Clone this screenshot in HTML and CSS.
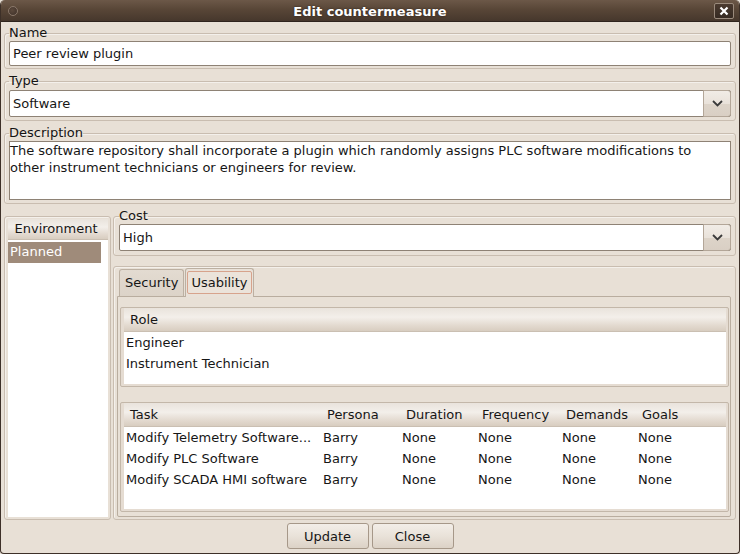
FILE: index.html
```html
<!DOCTYPE html>
<html>
<head>
<meta charset="utf-8">
<link rel="stylesheet" href="styles.css">
</head>
<body>
<div class="window">
  <div class="titlebar">
    <div class="tb-left"><span class="tb-circle"></span></div>
    <div class="tb-title">Edit countermeasure</div>
    <div class="tb-right">
      <span class="tb-close"><svg width="10" height="10" viewBox="0 0 10 10"><path d="M1.5 1.5 L8.5 8.5 M8.5 1.5 L1.5 8.5" stroke="#ffffff" stroke-width="2.2" fill="none"/></svg></span>
    </div>
  </div>
  <div class="content">
    <fieldset class="group g-name">
      <legend>Name</legend>
      <div class="field">Peer review plugin</div>
    </fieldset>
    <fieldset class="group g-type">
      <legend>Type</legend>
      <div class="combo">
        <span class="combo-text">Software</span>
        <span class="combo-btn"><svg width="11" height="7" viewBox="0 0 11 7"><path d="M1 1 L5.5 5.5 L10 1" stroke="#3a3a3a" stroke-width="1.8" fill="none"/></svg></span>
      </div>
    </fieldset>
    <fieldset class="group g-desc">
      <legend>Description</legend>
      <div class="textarea">The software repository shall incorporate a plugin which randomly assigns PLC software modifications to<br>other instrument technicians or engineers for review.</div>
    </fieldset>
    <div class="lower">
      <div class="env-panel">
        <div class="env-inner">
          <div class="list-header env-header">Environment</div>
          <div class="env-list">
            <div class="env-item selected">Planned</div>
          </div>
        </div>
      </div>
      <div class="right-col">
        <fieldset class="group g-cost">
          <legend>Cost</legend>
          <div class="combo">
            <span class="combo-text">High</span>
            <span class="combo-btn"><svg width="11" height="7" viewBox="0 0 11 7"><path d="M1 1 L5.5 5.5 L10 1" stroke="#3a3a3a" stroke-width="1.8" fill="none"/></svg></span>
          </div>
        </fieldset>
        <div class="tab-frame">
          <div class="tabbar">
            <div class="tab">Security</div>
            <div class="tab active"><span class="tab-focus">Usability</span></div>
          </div>
          <div class="tab-panel">
            <div class="table role-table">
              <div class="table-inner">
                <div class="list-header thead role-cols"><span>Role</span></div>
                <div class="trow role-cols"><span>Engineer</span></div>
                <div class="trow role-cols"><span>Instrument Technician</span></div>
              </div>
            </div>
            <div class="table task-table">
              <div class="table-inner">
                <div class="list-header thead task-cols">
                  <span>Task</span><span>Persona</span><span>Duration</span><span>Frequency</span><span>Demands</span><span>Goals</span>
                </div>
                <div class="trow task-cols">
                  <span>Modify Telemetry Software...</span><span>Barry</span><span>None</span><span>None</span><span>None</span><span>None</span>
                </div>
                <div class="trow task-cols">
                  <span>Modify PLC Software</span><span>Barry</span><span>None</span><span>None</span><span>None</span><span>None</span>
                </div>
                <div class="trow task-cols">
                  <span>Modify SCADA HMI software</span><span>Barry</span><span>None</span><span>None</span><span>None</span><span>None</span>
                </div>
              </div>
            </div>
          </div>
        </div>
      </div>
    </div>
    <div class="buttons">
      <button class="btn btn-update">Update</button>
      <button class="btn btn-close">Close</button>
    </div>
  </div>
</div>
</body>
</html>
```

FILE: styles.css
```css
* { box-sizing: border-box; }

html, body {
  margin: 0;
  padding: 0;
  background: #e8e0d6;
}

body {
  font-family: "DejaVu Sans", "Liberation Sans", sans-serif;
  font-size: 13px;
  color: #161616;
}

.window {
  width: 740px;
  height: 554px;
  border: 1px solid #3d3028;
  border-top: 0;
  border-radius: 5px 5px 4px 4px;
  background: #e8e0d6;
  overflow: hidden;
  display: flex;
  flex-direction: column;
}

.titlebar {
  height: 22px;
  flex: none;
  display: grid;
  grid-template-columns: 1fr auto 1fr;
  align-items: center;
  background: linear-gradient(to bottom, #6c5848 0%, #584637 45%, #46372c 100%);
  border-bottom: 1px solid #2f241d;
  color: #ffffff;
}

.tb-left { display: flex; align-items: center; padding-left: 7px; }

.tb-circle {
  width: 10px;
  height: 10px;
  border-radius: 50%;
  background: radial-gradient(circle at 40% 40%, #5c4a3d, #3e3028);
  border: 1px solid #8a786a;
}

.tb-title {
  font-weight: bold;
  font-size: 13px;
  text-shadow: 0 0 2px #2a1f18;
  padding-top: 1px;
}

.tb-right { display: flex; justify-content: flex-end; padding-right: 5px; }

.tb-close {
  width: 20px;
  height: 16px;
  display: flex;
  align-items: center;
  justify-content: center;
  background: linear-gradient(to bottom, #4a3a2f, #362a22);
  border: 1px solid #9a8a7c;
  border-radius: 2px;
}

.content {
  flex: 1;
  display: flex;
  flex-direction: column;
  padding: 0 3px;
}

.group {
  margin: 4px 0 0 0;
  min-width: 0;
  border: 1px solid #c9bdb0;
  border-radius: 3px;
  box-shadow: inset 1px 1px 0 #f4f0eb;
  padding: 0 4px 3px 4px;
}

.group legend {
  padding: 0;
  line-height: 16px;
  color: #141414;
}

.g-name { margin-top: 3px; padding-bottom: 2px; }

.field {
  height: 25px;
  background: #ffffff;
  border: 1px solid #8e8275;
  border-radius: 2px;
  padding: 0 3px;
  line-height: 23px;
}

.combo {
  margin-top: 1px;
  height: 27px;
  display: flex;
  background: #ffffff;
  border: 1px solid #8e8275;
  border-radius: 2px;
}

.combo-text {
  flex: 1;
  padding-left: 3px;
  line-height: 25px;
}

.combo-btn {
  width: 28px;
  margin: -1px -1px -1px 0;
  border: 1px solid #b3a698;
  border-radius: 0 3px 3px 0;
  background: linear-gradient(to bottom, #f1ece6 0%, #e9e2da 50%, #ddd4c9 51%, #d9cfc4 100%);
  display: flex;
  align-items: center;
  justify-content: center;
}

.textarea {
  height: 59px;
  background: #ffffff;
  border: 1px solid #8e8275;
  padding: 0;
  line-height: 17px;
}

.lower {
  margin-top: 4px;
  height: 312px;
  flex: none;
  display: flex;
  gap: 2px;
}

.env-panel {
  margin-top: 8px;
  width: 107px;
  flex: none;
  border: 1px solid #c9bdb0;
  border-radius: 3px;
  box-shadow: inset 1px 1px 0 #f4f0eb;
  padding: 2px 2px 2px 3px;
  display: flex;
}

.env-inner {
  flex: 1;
  display: flex;
  flex-direction: column;
}

.list-header {
  background: linear-gradient(to bottom, #e9e3dc 0%, #f3efea 40%, #e3dad0 75%, #d8cdc0 100%);
  border-bottom: 1px solid #cabfb2;
}

.env-header {
  height: 21px;
  line-height: 20px;
  padding-right: 4px;
  text-align: center;
}

.env-list {
  flex: 1;
  background: #ffffff;
  padding-top: 2px;
}

.env-item {
  width: 93px;
  height: 21px;
  line-height: 20px;
  padding-left: 2px;
}

.env-item.selected {
  background: #9f8b7a;
  color: #ffffff;
}

.right-col {
  flex: 1;
  display: flex;
  flex-direction: column;
}

.g-cost {
  margin-top: 0;
  padding: 0 4px 4px 5px;
}

.g-cost .combo { margin-top: 0; }

.tab-frame {
  margin-top: 10px;
  flex: 1;
  border: 1px solid #c9bdb0;
  border-radius: 3px;
  box-shadow: inset 1px 1px 0 #f4f0eb;
  padding: 1px 4px 2px 3px;
  display: flex;
  flex-direction: column;
}

.tabbar {
  height: 28px;
  flex: none;
  display: flex;
  align-items: flex-end;
  padding-left: 2px;
  gap: 1px;
  position: relative;
  z-index: 1;
}

.tab {
  height: 27px;
  padding: 0 5px;
  line-height: 26px;
  background: linear-gradient(to bottom, #e3dbd1, #dcd3c8);
  border: 1px solid #bcb0a2;
  border-bottom: 0;
  border-radius: 3px 3px 0 0;
}

.tab.active {
  height: 29px;
  margin-bottom: -1px;
  padding: 2px 1px 3px 1px;
  line-height: normal;
  background: #e9e1d8;
}

.tab-focus {
  display: block;
  height: 23px;
  line-height: 21px;
  padding: 0 3px;
  border: 1px solid #d7a38c;
  border-radius: 2px;
  background: #ebe3da;
}

.tab-panel {
  flex: 1;
  border: 1px solid #b9ad9f;
  border-radius: 0 2px 2px 2px;
  padding: 10px 1px 4px 2px;
  display: flex;
  flex-direction: column;
}

.table {
  border: 1px solid #c3b7a9;
  border-radius: 2px;
  background: #e5dcd2;
  padding: 0 2px 2px 3px;
  display: flex;
}

.table-inner {
  flex: 1;
  background: #ffffff;
  display: flex;
  flex-direction: column;
}

.role-table { height: 80px; }

.task-table { height: 110px; margin-top: 15px; }

.thead {
  height: 24px;
  flex: none;
  line-height: 23px;
}

.thead span { padding-left: 6px; white-space: nowrap; }

.trow {
  height: 21px;
  flex: none;
  line-height: 21px;
}

.trow span { padding-left: 2px; white-space: nowrap; overflow: hidden; }

.role-cols { display: grid; grid-template-columns: 1fr; }

.task-cols {
  display: grid;
  grid-template-columns: 197px 79px 76px 84px 76px 1fr;
}

.buttons {
  margin-top: 3px;
  display: flex;
  justify-content: center;
  gap: 3px;
}

.btn {
  height: 26px;
  font-family: "DejaVu Sans", "Liberation Sans", sans-serif;
  font-size: 13px;
  color: #161616;
  border: 1px solid #a69889;
  border-radius: 3px;
  background: linear-gradient(to bottom, #f3eee8 0%, #e9e2d9 50%, #dcd2c6 100%);
  padding: 0;
}

.btn-update { width: 82px; }
.btn-close { width: 82px; }
```
